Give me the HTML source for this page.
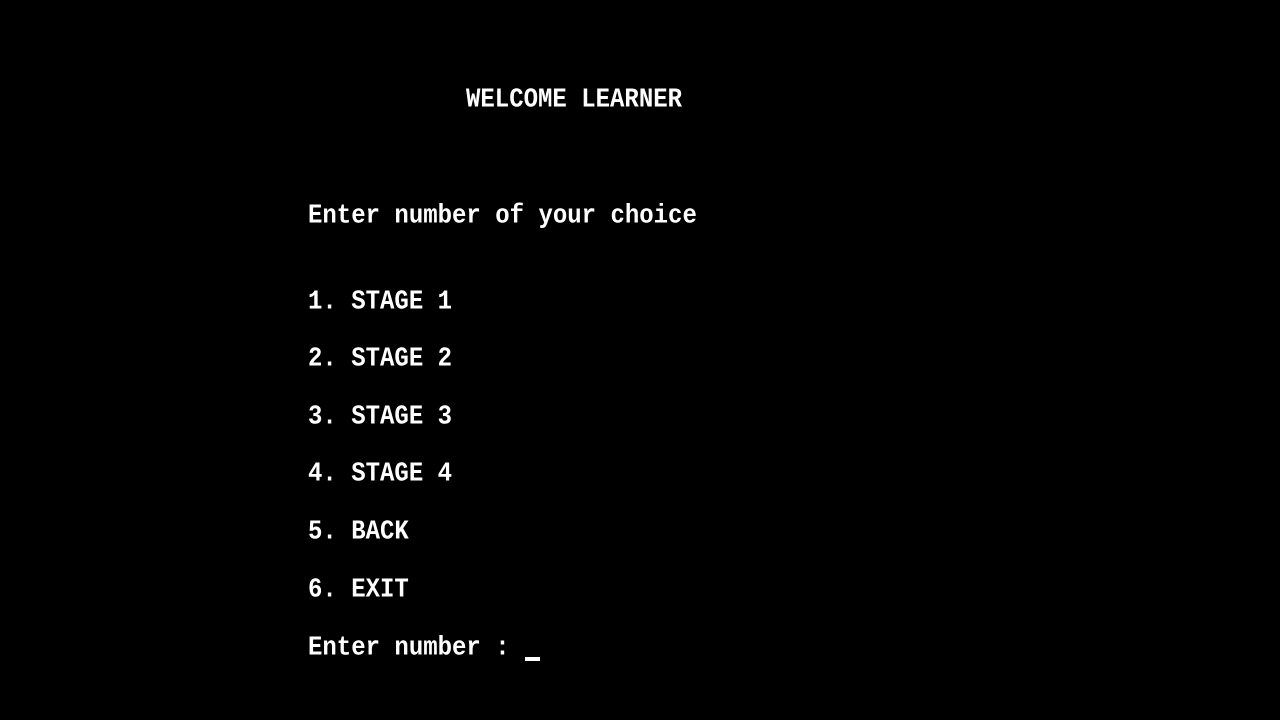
<!DOCTYPE html>
<html><head><meta charset="utf-8"><style>
html,body{margin:0;padding:0;background:#000;width:1280px;height:720px;overflow:hidden}
.t{position:absolute;color:#fff;font-family:"Liberation Mono",monospace;font-size:24px;font-weight:bold;line-height:28px;white-space:pre;transform:scaleY(1.1);transform-origin:left center}
.c{position:absolute;left:525px;top:657px;width:15px;height:4px;background:#fff}
</style></head><body>
<div class="t" style="left:466px;top:87px">WELCOME LEARNER</div>
<div class="t" style="left:308px;top:203px">Enter number of your choice</div>
<div class="t" style="left:308px;top:289px">1. STAGE 1</div>
<div class="t" style="left:308px;top:346px">2. STAGE 2</div>
<div class="t" style="left:308px;top:404px">3. STAGE 3</div>
<div class="t" style="left:308px;top:461px">4. STAGE 4</div>
<div class="t" style="left:308px;top:519px">5. BACK</div>
<div class="t" style="left:308px;top:577px">6. EXIT</div>
<div class="t" style="left:308px;top:635px">Enter number :</div>
<div class="c"></div>
</body></html>
